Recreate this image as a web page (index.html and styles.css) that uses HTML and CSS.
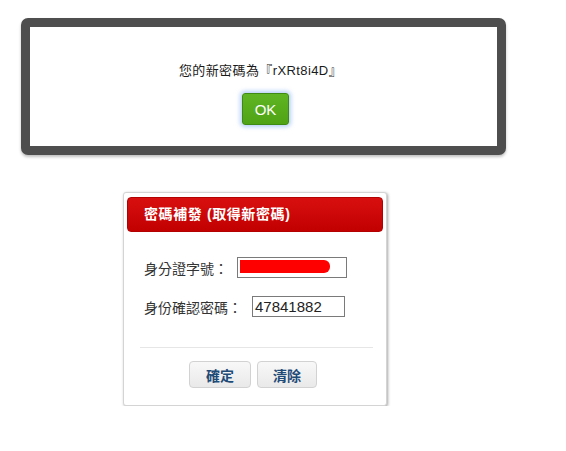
FILE: index.html
```html
<!DOCTYPE html>
<html lang="zh-Hant">
<head>
<meta charset="utf-8">
<title>密碼補發</title>
<link rel="stylesheet" href="styles.css">
</head>
<body>
  <div class="alert">
    <p class="alert-msg">您的新密碼為『rXRt8i4D』</p>
    <button class="ok-btn" type="button">OK</button>
  </div>

  <div class="card">
    <div class="card-head">密碼補發 (取得新密碼)</div>
    <div class="card-body">
      <div class="row">
        <span class="label">身分證字號：</span>
        <span class="field field-id"><span class="redact"></span></span>
      </div>
      <div class="row">
        <span class="label">身份確認密碼：</span>
        <span class="field field-pw">47841882</span>
      </div>
    </div>
    <div class="divider"></div>
    <div class="actions">
      <button class="act-btn" type="button">確定</button>
      <button class="act-btn" type="button">清除</button>
    </div>
  </div>
</body>
</html>
```
FILE: styles.css
```css
* { box-sizing: border-box; }
body {
  margin: 0;
  background: #fff;
  font-family: "Liberation Sans", "Noto Sans CJK TC", sans-serif;
  color: #222;
  padding: 18px 0 0 21px;
}
.alert {
  width: 485px;
  height: 137px;
  border: 9px solid #4e4e4e;
  border-radius: 7px;
  background: #fff;
  box-shadow: 0 2px 3px rgba(0,0,0,0.25);
  display: flex;
  flex-direction: column;
  align-items: center;
  padding-top: 36px;
}
.alert-msg {
  margin: 0;
  font-size: 13px;
  line-height: 16px;
  letter-spacing: 0.4px;
  color: #1a1a1a;
  position: relative;
  left: -3px;
}
.ok-btn {
  margin-top: 14px;
  width: 47px;
  height: 32px;
  border: 1px solid #3f8a14;
  border-radius: 3px;
  background: linear-gradient(#5fb523, #4fa315);
  color: #fff;
  font-family: "Liberation Sans", sans-serif;
  font-size: 15px;
  padding: 0;
  box-shadow: 0 0 4px 2px rgba(120,170,240,0.55);
  position: relative;
  left: 2px;
}
.card {
  margin-top: 37px;
  margin-left: 102px;
  width: 264px;
  height: 214px;
  border: 1px solid #d4d4d4;
  border-radius: 3px;
  background: #fff;
  box-shadow: 1px 1px 3px rgba(0,0,0,0.35);
  padding: 4px 3px 0 3px;
}
.card-head {
  height: 35px;
  border-radius: 4px;
  background: linear-gradient(#d80f0f, #c20000);
  border: 1px solid #b30000;
  color: #fff;
  font-weight: bold;
  font-size: 14px;
  letter-spacing: 0.6px;
  line-height: 33px;
  padding-left: 16px;
}
.card-body {
  padding: 25px 0 0 17px;
  display: flex;
  flex-direction: column;
  gap: 18px;
}
.row {
  display: flex;
  align-items: center;
  height: 21px;
}
.label {
  font-size: 14px;
  color: #333;
}
.field {
  height: 21px;
  border: 1px solid #7a7a7a;
  background: #fff;
  font-size: 15px;
  line-height: 19px;
  color: #222;
  padding-left: 2px;
}
.field-id {
  width: 110px;
  margin-left: 9px;
  padding-top: 2px;
}
.redact {
  display: block;
  width: 90px;
  height: 13px;
  background: #f00;
  border-radius: 0 6px 6px 0;
}
.field-pw {
  width: 93px;
  margin-left: 10px;
}
.divider {
  margin: 30px 10px 0 13px;
  height: 1px;
  background: #e6e6e6;
}
.actions {
  display: flex;
  justify-content: center;
  gap: 6px;
  padding-top: 13px;
  padding-right: 4px;
}
.act-btn {
  height: 27px;
  width: 62px;
  border: 1px solid #d2d2d2;
  border-radius: 4px;
  background: linear-gradient(#f8f8f8, #e9e9e9);
  color: #1f4b78;
  font-family: "Liberation Sans", "Noto Sans CJK TC", sans-serif;
  font-weight: bold;
  font-size: 14px;
  padding: 0;
}
.act-btn + .act-btn { width: 60px; }
```
